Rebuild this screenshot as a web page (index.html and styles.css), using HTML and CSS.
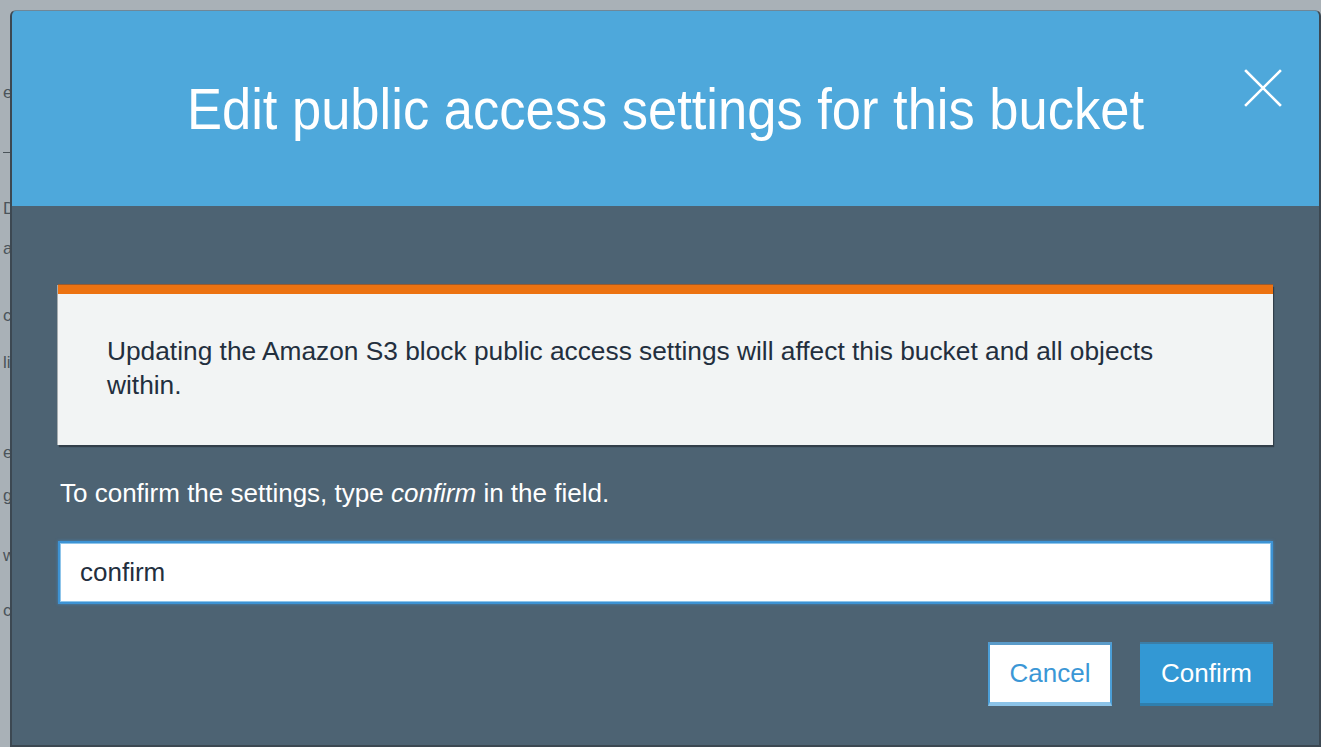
FILE: index.html
```html
<!DOCTYPE html>
<html lang="en">
<head>
<meta charset="utf-8">
<title>Edit public access settings for this bucket</title>
<link rel="stylesheet" href="styles.css">
</head>
<body>
<div class="viewport">
  <div class="bgpage" aria-hidden="true">
    <div class="bg-line l1">e</div>
    <div class="bg-rule"></div>
    <div class="bg-line l3">D</div>
    <div class="bg-line l4">a</div>
    <div class="bg-line l5">c</div>
    <div class="bg-line l6">li</div>
    <div class="bg-line l7">e</div>
    <div class="bg-line l8">g</div>
    <div class="bg-line l9">w</div>
    <div class="bg-line l10">c</div>
  </div>

  <div class="modal" role="dialog" aria-labelledby="modal-title">
    <div class="modal-header">
      <h1 class="modal-title" id="modal-title">Edit public access settings for this bucket</h1>
      <button class="close-btn" aria-label="Close">
        <svg width="38" height="38" viewBox="0 0 38 38">
          <path d="M2 2 L36 36 M36 2 L2 36" stroke="#ffffff" stroke-width="2.6" fill="none" stroke-linecap="square"/>
        </svg>
      </button>
    </div>
    <div class="modal-body">
      <div class="alert">
        <p class="alert-text">Updating the Amazon S3 block public access settings will affect this bucket and all objects within.</p>
      </div>
      <p class="confirm-label">To confirm the settings, type <em>confirm</em> in the field.</p>
      <input class="confirm-input" type="text" value="confirm">
      <div class="actions">
        <button class="btn btn-cancel">Cancel</button>
        <button class="btn btn-confirm">Confirm</button>
      </div>
    </div>
  </div>
</div>
</body>
</html>
```

FILE: styles.css
```css
* { box-sizing: border-box; }

html, body {
  margin: 0;
  padding: 0;
  background: #ffffff;
  font-family: "Liberation Sans", Arial, sans-serif;
}

.viewport {
  position: relative;
  width: 1321px;
  height: 747px;
  background: #a9b1b7;
  overflow: hidden;
}

/* underlying page, mostly hidden behind modal */
.bgpage {
  display: flex;
  flex-direction: column;
  padding-left: 3px;
  color: #4b545b;
  font-size: 17px;
  line-height: 18px;
}
.bg-line { height: 18px; white-space: nowrap; }
.bg-rule { height: 1px; width: 40px; background: #4a5359; margin-top: 50px; }
.l1 { margin-top: 84px; }
.l3 { margin-top: 47px; }
.l4 { margin-top: 22px; }
.l5 { margin-top: 49px; }
.l6 { margin-top: 29px; }
.l7 { margin-top: 72px; }
.l8 { margin-top: 25px; }
.l9 { margin-top: 42px; }
.l10 { margin-top: 37px; }

.modal {
  position: absolute;
  left: 10px;
  top: 10px;
  width: 1311px;
  height: 737px;
  display: flex;
  flex-direction: column;
  border: 2px solid #3c4852;
  border-top: 1px solid #6f8797;
  border-radius: 6px 6px 0 0;
  overflow: hidden;
  background: #4d6373;
}

.modal-header {
  position: relative;
  height: 195px;
  flex: 0 0 195px;
  background: #4ea8db;
  display: flex;
  align-items: center;
  justify-content: center;
  padding-top: 2px;
}

.modal-title {
  margin: 0;
  color: #ffffff;
  font-weight: normal;
  font-size: 52.5px;
  line-height: 60px;
  transform: scaleY(1.08);
}

.close-btn {
  position: absolute;
  right: 37px;
  top: 58px;
  width: 38px;
  height: 38px;
  padding: 0;
  border: 0;
  background: transparent;
  display: flex;
}

.modal-body {
  flex: 1;
  display: flex;
  flex-direction: column;
  padding: 79px 46px 0 46px;
  background: #4d6373;
}

.alert {
  background: #f2f4f4;
  border-top: 9px solid #ec7211;
  box-shadow: 1px 2px 1px rgba(30, 35, 40, 0.55), -1px 0 0 #a7adb0;
  height: 160px;
  padding: 40px 100px 0 49px;
  position: relative;
}
.alert::before {
  content: "";
  position: absolute;
  left: 0; right: 0; top: -10px;
  height: 1px;
  background: #9a5a2e;
}

.alert-text {
  margin: 0;
  color: #232f3e;
  font-size: 26.3px;
  line-height: 34px;
}

.confirm-label {
  margin: 31px 0 0 2px;
  color: #ffffff;
  font-size: 26px;
  line-height: 34px;
}
.confirm-label em { font-style: italic; }

.confirm-input {
  margin-top: 31px;
  height: 63px;
  width: 100%;
  border: 2px solid #3d93d4;
  box-shadow: inset 0 0 0 1px #8fc5ea, 0 0 3px rgba(61, 147, 212, 0.7);
  background: #ffffff;
  padding: 0 20px;
  font-family: "Liberation Sans", Arial, sans-serif;
  font-size: 26px;
  color: #232f3e;
  outline: none;
}

.actions {
  margin-top: 38px;
  display: flex;
  justify-content: flex-end;
  gap: 28px;
}

.btn {
  height: 64px;
  font-family: "Liberation Sans", Arial, sans-serif;
  font-size: 26px;
  padding: 0;
  cursor: pointer;
}

.btn-cancel {
  width: 124px;
  background: #ffffff;
  color: #3b97d6;
  border: 2px solid #4b9fd8;
  border-top: 3px solid #5a9bc9;
  border-bottom: 4px solid #8cc3e8;
}

.btn-confirm {
  width: 133px;
  background: #3398d4;
  color: #ffffff;
  border: 0;
  border-top: 2px solid #3b7ea8;
  border-bottom: 3px solid #2f7fae;
}
```
